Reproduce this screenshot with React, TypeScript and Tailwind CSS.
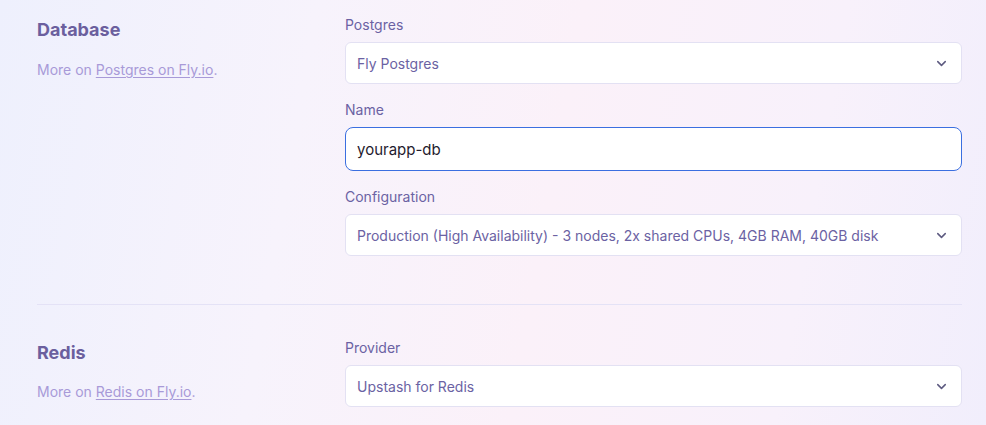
import { ChevronDown } from "lucide-react";

function Select({ value }: { value: string }) {
  return (
    <div className="flex h-[42px] items-center justify-between rounded-md border border-[#e3e1f3] bg-white pl-[11px] pr-[12px] text-[14px] text-[#6b62a3]">
      <span>{value}</span>
      <ChevronDown size={15} strokeWidth={2.4} className="text-[#5d5a80]" />
    </div>
  );
}

function Field({ label, children }: { label: string; children: React.ReactNode }) {
  return (
    <div className="flex flex-col gap-[7px]">
      <label className="text-[14px] leading-5 text-[#6b62a3]">{label}</label>
      {children}
    </div>
  );
}

export default function App() {
  return (
    <div
      className="h-[425px] w-[986px] overflow-hidden bg-[linear-gradient(100deg,#eef0fd_0%,#f7f3fc_30%,#fbf1f9_55%,#f8f1fb_80%,#f1eefc_100%)] px-[37px] pr-[24px]"
      style={{ fontFamily: "Inter, 'Noto Sans', sans-serif" }}
    >
      <div className="flex pt-[15px] pb-[48px]">
        <div className="w-[308px] pt-[1px]">
          <h2 className="text-[18px] font-bold leading-7 text-[#6b5f9e]">Database</h2>
          <p className="mt-[15px] text-[14px] text-[#a89ad8]">
            More on{" "}
            <a href="#" className="underline underline-offset-2">
              Postgres on Fly.io
            </a>
            .
          </p>
        </div>
        <div className="flex flex-1 flex-col gap-[16px]">
          <Field label="Postgres">
            <Select value="Fly Postgres" />
          </Field>
          <Field label="Name">
            <input
              defaultValue="yourapp-db"
              className="h-[44px] rounded-lg border border-[#3b6fe0] bg-white px-[11px] text-[15px] text-[#1f1b2e] outline-none"
            />
          </Field>
          <Field label="Configuration">
            <Select value="Production (High Availability) - 3 nodes, 2x shared CPUs, 4GB RAM, 40GB disk" />
          </Field>
        </div>
      </div>
      <div className="border-t border-[#e4e2f6]" />
      <div className="flex pt-[33px]">
        <div className="w-[308px] pt-[1px]">
          <h2 className="text-[18px] font-bold leading-7 text-[#6b5f9e]">Redis</h2>
          <p className="mt-[14px] text-[14px] text-[#a89ad8]">
            More on{" "}
            <a href="#" className="underline underline-offset-2">
              Redis on Fly.io
            </a>
            .
          </p>
        </div>
        <div className="flex flex-1 flex-col">
          <Field label="Provider">
            <Select value="Upstash for Redis" />
          </Field>
        </div>
      </div>
    </div>
  );
}
